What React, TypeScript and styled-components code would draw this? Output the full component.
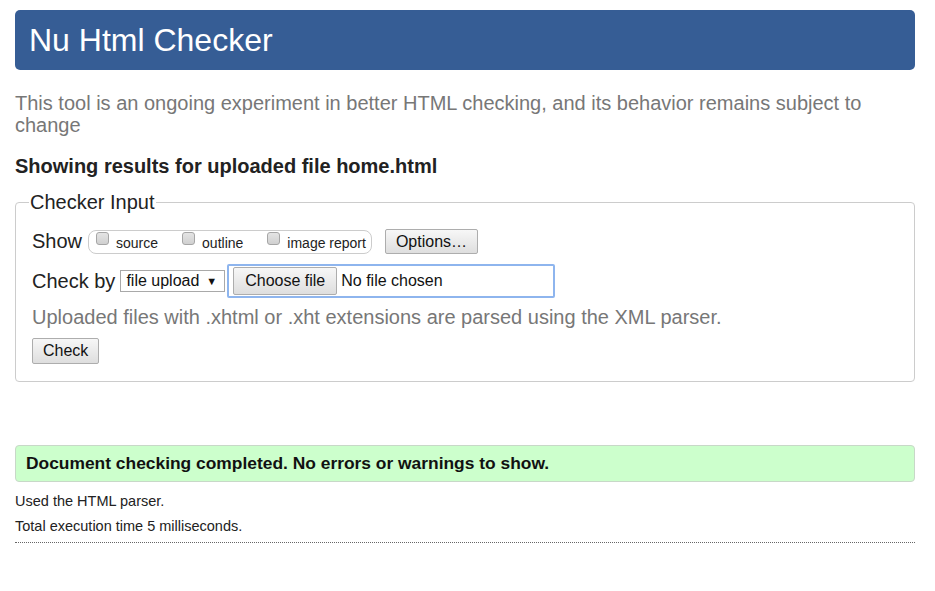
import React from "react";
import styled, { createGlobalStyle } from "styled-components";

const Global = createGlobalStyle`
  html, body { margin: 0; padding: 0; background: #fff; }
  body { font-family: "Liberation Sans", Arial, sans-serif; color: #222; }
`;

const Page = styled.div`
  width: 900px;
  padding: 10px 0 0 15px;
`;

const Header = styled.header`
  height: 60px;
  background: #365d95;
  border-radius: 5px;
  display: flex;
  align-items: center;
  padding-left: 14px;
`;

const Title = styled.h1`
  margin: 0;
  font-size: 32px;
  font-weight: normal;
  color: #fff;
  line-height: 1;
`;

const Intro = styled.p`
  margin: 22px 0 0;
  font-size: 20px;
  line-height: 22px;
  color: #777;
`;

const Heading = styled.h2`
  margin: 19px 0 0;
  font-size: 20px;
  line-height: 22px;
  font-weight: bold;
  color: #222;
`;

const Field = styled.fieldset`
  margin: 14px 0 0;
  border: 1px solid #ccc;
  border-radius: 4px;
  padding: 16px 16px 17px;
  display: flex;
  flex-direction: column;
  align-items: flex-start;
  min-width: 0;
`;

const Legend = styled.legend`
  font-size: 20px;
  line-height: 22px;
  padding: 0 1px;
  margin-left: -3px;
  color: #222;
`;

const Row = styled.div<{ $mt?: number }>`
  display: flex;
  align-items: center;
  margin-top: ${(p) => p.$mt ?? 0}px;
`;

const RowLabel = styled.span`
  font-size: 20px;
  color: #222;
  margin-right: 6px;
`;

const Pill = styled.div`
  display: flex;
  align-items: flex-start;
  height: 22px;
  border: 1px solid #ccc;
  border-radius: 8px;
  padding: 0 5px 0 7px;
  gap: 24px;
`;

const Opt = styled.label`
  display: flex;
  align-items: flex-start;
  font-size: 14px;
  color: #222;
  line-height: 16px;
`;

const Box = styled.span`
  display: inline-block;
  width: 11px;
  height: 11px;
  margin-top: 1px;
  margin-right: 7px;
  border: 1px solid #a6a6a6;
  border-radius: 3px;
  background: linear-gradient(#e4e4e4, #d0d0d0);
`;

const OptText = styled.span`
  padding-top: 4px;
`;

const Button = styled.button<{ $h?: number; $px?: number }>`
  font-family: "Liberation Sans", Arial, sans-serif;
  font-size: 16px;
  color: #111;
  height: ${(p) => p.$h ?? 26}px;
  padding: 0 ${(p) => p.$px ?? 10}px;
  border: 1px solid #adadad;
  border-radius: 2px;
  background: linear-gradient(#f7f7f7, #dedede);
  margin: 0;
`;

const OptionsButton = styled(Button)`
  margin-left: 13px;
`;

const Select = styled.div`
  display: flex;
  align-items: center;
  height: 22px;
  box-sizing: border-box;
  border: 1px solid #a9a9a9;
  padding: 0 7px 0 5px;
  font-size: 16px;
  color: #111;
  gap: 7px;
  margin-left: -1px;
`;

const Caret = styled.span`
  font-size: 11px;
`;

const FileBox = styled.div`
  display: flex;
  align-items: center;
  width: 328px;
  height: 34px;
  box-sizing: border-box;
  border: 2px solid #8eb5ee;
  border-radius: 2px;
  padding: 0 4px;
  margin-left: 2px;
  gap: 4px;
`;

const FileText = styled.span`
  font-size: 16px;
  color: #111;
`;

const Hint = styled.p`
  margin: 8px 0 0;
  font-size: 20px;
  line-height: 22px;
  color: #777;
`;

const CheckButton = styled(Button)`
  margin-top: 10px;
`;

const Success = styled.div`
  margin-top: 63px;
  height: 37px;
  box-sizing: border-box;
  display: flex;
  align-items: center;
  padding: 0 10px;
  background: #ccffcc;
  border: 1px solid #c8d8c8;
  border-radius: 4px;
  font-size: 17.4px;
  font-weight: bold;
  color: #111;
`;

const Note = styled.p<{ $mt: number }>`
  margin: ${(p) => p.$mt}px 0 0;
  font-size: 14.5px;
  line-height: 17px;
  color: #222;
`;

const Rule = styled.hr`
  margin: 7px 0 0;
  border: 0;
  border-top: 1px dotted #666;
`;

export default function App() {
  return (
    <>
      <Global />
      <Page>
        <Header>
          <Title>Nu Html Checker</Title>
        </Header>
        <Intro>
          This tool is an ongoing experiment in better HTML checking, and its behavior remains subject to change
        </Intro>
        <Heading>Showing results for uploaded file home.html</Heading>
        <Field>
          <Legend>Checker Input</Legend>
          <Row>
            <RowLabel>Show</RowLabel>
            <Pill>
              {["source", "outline", "image report"].map((t) => (
                <Opt key={t}>
                  <Box />
                  <OptText>{t}</OptText>
                </Opt>
              ))}
            </Pill>
            <OptionsButton $h={25}>Options…</OptionsButton>
          </Row>
          <Row $mt={10}>
            <RowLabel>Check by</RowLabel>
            <Select>
              <span>file upload</span>
              <Caret>▼</Caret>
            </Select>
            <FileBox>
              <Button $h={28} $px={11}>Choose file</Button>
              <FileText>No file chosen</FileText>
            </FileBox>
          </Row>
          <Hint>Uploaded files with .xhtml or .xht extensions are parsed using the XML parser.</Hint>
          <CheckButton $h={26} $px={10}>Check</CheckButton>
        </Field>
        <Success>Document checking completed. No errors or warnings to show.</Success>
        <Note $mt={11}>Used the HTML parser.</Note>
        <Note $mt={8}>Total execution time 5 milliseconds.</Note>
        <Rule />
      </Page>
    </>
  );
}
